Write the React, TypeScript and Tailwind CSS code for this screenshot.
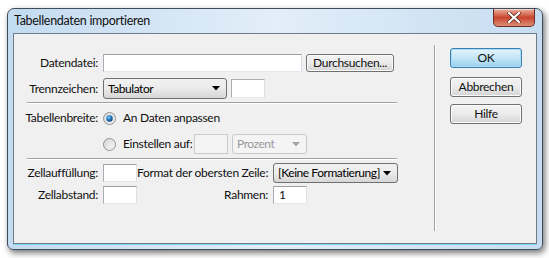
import React from "react"

function Radio({ checked }: { checked?: boolean }) {
  return (
    <svg width="13" height="13" viewBox="0 0 13 13" className="shrink-0">
      <defs>
        <linearGradient id={checked ? "rbg1" : "rbg0"} x1="0" y1="0" x2="1" y2="1">
          <stop offset="0" stopColor="#cfd1d3" />
          <stop offset="1" stopColor="#ffffff" />
        </linearGradient>
        <radialGradient id="rdot" cx="0.4" cy="0.35" r="0.7">
          <stop offset="0" stopColor="#8fd0ff" />
          <stop offset="0.45" stopColor="#2a7fc8" />
          <stop offset="1" stopColor="#0c3a6e" />
        </radialGradient>
      </defs>
      <circle cx="6.5" cy="6.5" r="6" fill={`url(#${checked ? "rbg1" : "rbg0"})`} stroke="#8e9092" />
      <circle cx="6.5" cy="6.5" r="4.5" fill="none" stroke="#e2e3e4" strokeWidth="1" />
      {checked && <circle cx="6.5" cy="6.5" r="3.2" fill="url(#rdot)" />}
    </svg>
  )
}

function Arrow({ disabled }: { disabled?: boolean }) {
  return (
    <svg width="8" height="5" viewBox="0 0 8 5" className="shrink-0">
      <path d="M0 0 L8 0 L4 4.5 Z" fill={disabled ? "#a5a5a5" : "#000"} />
    </svg>
  )
}

function Input({ w, value }: { w: string; value?: string }) {
  return (
    <div
      className={`${w} h-[18px] bg-white border border-[#abadb3] border-t-[#9da0a6] border-r-[#dbdfe6] border-b-[#e3e9ef] flex items-center pl-[5px] text-[12px] leading-none`}
    >
      {value}
    </div>
  )
}

function Select({ w, h, value, disabled }: { w: string; h: string; value: string; disabled?: boolean }) {
  return (
    <div
      className={`${w} ${h} rounded-[3px] border flex items-center justify-between pl-[4px] pr-[6px] text-[12px] ${
        disabled
          ? "border-[#c6c9cc] bg-[#f4f4f4] text-[#9a9a9a]"
          : "border-[#707070] bg-gradient-to-b from-[#f2f2f2] via-[#ebebeb] to-[#d6d6d6] text-black"
      }`}
    >
      <span className="whitespace-nowrap tracking-[-0.45px]">{value}</span>
      <Arrow disabled={disabled} />
    </div>
  )
}

function Button({ children, primary, w = "w-[72px]", h = "h-[20px]" }: { children: React.ReactNode; primary?: boolean; w?: string; h?: string }) {
  return (
    <div
      className={`${w} ${h} rounded-[3px] border flex items-center justify-center whitespace-nowrap text-[12px] ${
        primary
          ? "border-[#3c7fb1] bg-gradient-to-b from-[#e5f4fc] via-[#c4e5f6] to-[#98d1ef] shadow-[inset_0_0_0_1px_#a6dcf6]"
          : "border-[#707070] bg-gradient-to-b from-[#f3f3f3] via-[#ebebeb] to-[#d4d4d4] shadow-[inset_0_0_0_1px_#fcfcfc]"
      }`}
    >
      {children}
    </div>
  )
}

export default function App() {
  return (
    <div className="w-[549px] h-[258px] bg-white pl-[7px] pt-[8px] font-['Lato',sans-serif] tracking-[-0.3px] text-[#111]">
      <div className="relative w-[536px] h-[242px] rounded-t-[7px] rounded-b-[6px] border border-[#3f4d5b] bg-gradient-to-r from-[#c3dbf0] via-[#e2eef9] to-[#c6ddf1] shadow-[2px_3px_6px_rgba(0,0,0,0.55)] flex flex-col px-[5px] pb-[5px]">
        {/* title bar */}
        <div className="h-[24px] flex items-center pl-[1px] text-[12.5px]">Tabellendaten importieren</div>
        <div className="absolute top-0 right-[7px] w-[42px] h-[18px] rounded-b-[5px] border border-t-0 border-[#6d2d22] bg-gradient-to-b from-[#eab0a0] via-[#c8452c] to-[#dc8c76] shadow-[inset_0_1px_0_rgba(255,255,255,0.5)] flex items-center justify-center">
          <svg width="14" height="11" viewBox="0 0 14 11">
            <path d="M2 1 L12 10 M12 1 L2 10" stroke="#4a1a10" strokeWidth="3.4" strokeLinecap="square" />
            <path d="M2 1 L12 10 M12 1 L2 10" stroke="#ffffff" strokeWidth="2.2" strokeLinecap="square" />
          </svg>
        </div>

        {/* client area */}
        <div className="flex-1 border border-[#6f7c89] bg-[#f0f0f0] flex shadow-[0_1px_0_#7fd3ee]">
          <div className="w-[420px] flex flex-col text-[12px]">
            <div className="mt-[20px] flex items-center h-[18px]">
              <div className="w-[84px] text-right">Datendatei:</div>
              <div className="ml-[5px] flex">
                <Input w="w-[199px]" />
                <div className="ml-[4px]">
                  <Button w="w-[88px]" h="h-[18px]">Durchsuchen...</Button>
                </div>
              </div>
            </div>
            <div className="mt-[6px] flex items-center h-[21px]">
              <div className="w-[84px] text-right">Trennzeichen:</div>
              <div className="ml-[5px] flex items-center">
                <Select w="w-[124px]" h="h-[21px]" value="Tabulator" />
                <div className="ml-[4px]">
                  <div className="w-[34px] h-[19px] bg-white border border-[#abadb3] border-r-[#dbdfe6] border-b-[#e3e9ef]" />
                </div>
              </div>
            </div>
            <div className="mt-[3px] ml-[13px] w-[370px] h-[2px] border-t border-[#a0a0a0] border-b border-b-white" />
            <div className="mt-[6px] flex items-center h-[16px]">
              <div className="w-[84px] text-right">Tabellenbreite:</div>
              <div className="ml-[5px] flex items-center">
                <Radio checked />
                <span className="ml-[7px]">An Daten anpassen</span>
              </div>
            </div>
            <div className="mt-[8px] flex items-center h-[20px]">
              <div className="w-[84px]" />
              <div className="ml-[5px] flex items-center">
                <Radio />
                <span className="ml-[7px] w-[71px] whitespace-nowrap">Einstellen auf:</span>
                <div className="w-[34px] h-[20px] bg-[#f4f4f4] border border-[#c7cacd]" />
                <div className="ml-[4px]">
                  <Select w="w-[75px]" h="h-[20px]" value="Prozent" disabled />
                </div>
              </div>
            </div>
            <div className="mt-[4px] ml-[13px] w-[370px] h-[2px] border-t border-[#a0a0a0] border-b border-b-white" />
            <div className="mt-[3px] flex items-center h-[20px]">
              <div className="w-[84px] text-right">Zellauffüllung:</div>
              <div className="ml-[5px] flex items-center">
                <Input w="w-[34px]" />
                <div className="w-[131px] text-right whitespace-nowrap">Format der obersten Zeile:</div>
                <div className="ml-[5px]">
                  <Select w="w-[125px]" h="h-[20px]" value="[Keine Formatierung]" />
                </div>
              </div>
            </div>
            <div className="mt-[3px] flex items-center h-[18px]">
              <div className="w-[84px] text-right">Zellabstand:</div>
              <div className="ml-[5px] flex items-center">
                <Input w="w-[34px]" />
                <div className="w-[131px] text-right whitespace-nowrap">Rahmen:</div>
                <div className="ml-[5px]">
                  <Input w="w-[34px]" value="1" />
                </div>
              </div>
            </div>
          </div>
          <div className="mt-[11px] mb-[12px] w-px bg-[#a0a0a0] border-r border-white box-content" />
          <div className="ml-[14px] flex flex-col text-[12px]">
            <div className="mt-[14px]">
              <Button primary>OK</Button>
            </div>
            <div className="mt-[9px]">
              <Button>Abbrechen</Button>
            </div>
            <div className="mt-[7px]">
              <Button>Hilfe</Button>
            </div>
          </div>
        </div>
      </div>
    </div>
  )
}
